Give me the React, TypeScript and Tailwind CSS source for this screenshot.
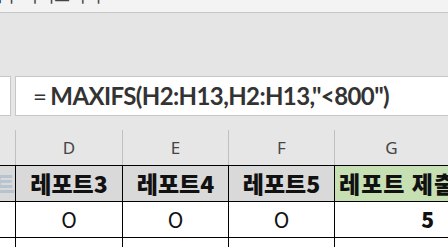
import React from "react";

const kr = "font-['Noto_Sans_CJK_KR','Noto_Sans',sans-serif]";

export default function App() {
  const cols = ["", "D", "E", "F", "G"];
  const headers = ["트", "레포트3", "레포트4", "레포트5"];
  const rows = [
    ["", "O", "O", "O", "5"],
    ["", "O", "O", "O", "4"],
  ];

  return (
    <div className={`w-[448px] h-[247px] overflow-hidden bg-[#e6e6e6] ${kr}`}>
      {/* ribbon label strip, only bottom of text visible */}
      <div className="h-[13px] bg-[#f3f3f3] border-b border-[#c6c6c6] overflow-hidden">
        <div className="-mt-[17px] -ml-[12px] text-[17px] leading-[24px] text-[#444] whitespace-nowrap">
          함수 라이브러리
        </div>
      </div>
      <div className="h-[63px] bg-[#e5e5e5]" />

      {/* formula bar */}
      <div className="h-[40px] flex gap-[4px]">
        <div className="w-[11px] bg-white border-y border-r border-[#c6c6c6]" />
        <div className="flex-1 bg-white border-y border-l border-[#c6c6c6] flex items-center pl-[17px]">
          <span className="font-['Lato',sans-serif] text-[24px] text-[#333] leading-none whitespace-nowrap tracking-[-0.6px]">
            <span className="font-normal mr-[4px]">=</span>
            <span className="font-bold">MAXIFS(H2:H13,H2:H13,"&lt;800")</span>
          </span>
        </div>
      </div>
      <div className="h-[14px]" />

      {/* column letters */}
      <div className="grid grid-cols-[16px_107px_106px_106px_113px] h-[36px] border-b border-black">
        {cols.map((c, i) => (
          <div
            key={i}
            className={`flex items-center justify-center text-[17px] text-[#444] font-['Noto_Sans',sans-serif] ${i < 4 ? "border-r border-[#c0c0c0]" : ""}`}
          >
            {c}
          </div>
        ))}
      </div>

      {/* header row */}
      <div className="grid grid-cols-[16px_107px_106px_106px_113px] h-[36px] border-b border-black">
        {headers.map((h, i) => (
          <div
            key={i}
            className={`bg-[#d9d9d9] border-r border-black flex items-center overflow-hidden whitespace-nowrap font-black text-[23px] ${i === 0 ? "justify-end text-[#b7c3cf]" : "justify-center text-[#111]"}`}
          >
            {h}
          </div>
        ))}
        <div className="bg-[#c6e0b4] flex items-center overflow-hidden whitespace-nowrap font-black text-[23px] tracking-[1px] text-[#111] pl-[4px]">
          레포트 제출 횟수
        </div>
      </div>

      {/* data rows */}
      {rows.map((r, ri) => (
        <div
          key={ri}
          className="grid grid-cols-[16px_107px_106px_106px_113px] h-[36px] border-b border-black bg-white"
        >
          {r.map((v, i) => (
            <div
              key={i}
              className={`flex items-center text-[21px] text-[#111] ${i < 4 ? "border-r border-black justify-center" : "justify-end pr-[14px] font-black"}`}
            >
              {v}
            </div>
          ))}
        </div>
      ))}
    </div>
  );
}
